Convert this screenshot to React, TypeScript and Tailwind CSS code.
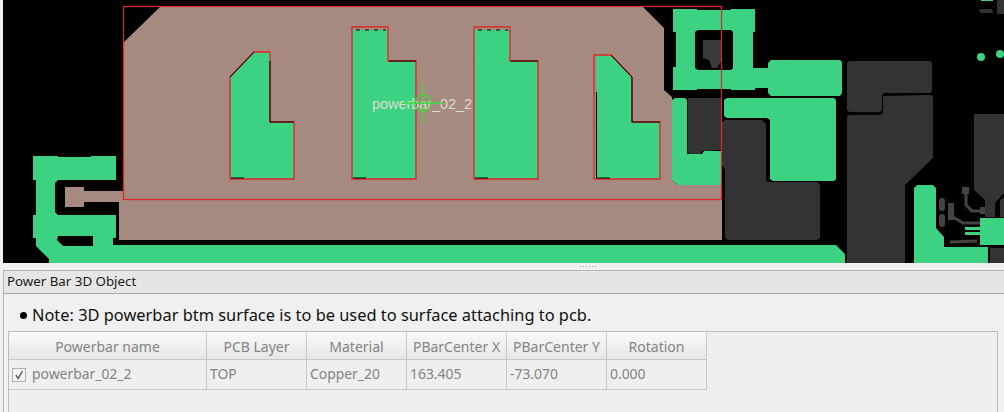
import React from 'react';

const GREEN = '#3dd281';
const PINK = '#a68a80';
const DARK = '#333333';
const RED = '#e0242a';

const padOutlines = [
  '230,77 254,52 270,52 270,122 294,122 294,179 230,179',
  '352,27 388,27 388,61 416,61 416,179 352,179',
  '474,27 510,27 510,61 538,61 538,179 474,179',
  '594,55 611,55 632,77 632,122 660,122 660,179 594,179',
];

const darkShapes = [
  '849,61 930,61 932,63 932,91 930,93 884,93 882,95 882,110 880,112 849,112 847,110 847,63',
  '849,115 880,115 883,113 883,96 931,95 933,97 933,158 905,185 905,263 847,263 847,117',
  '725,120 762,120 766,124 766,180 768,182 817,182 820,185 820,238 817,240 728,240 725,238 725,170 722,165 722,122',
  '688,98 722,98 722,150 702,151 700,154 690,154 688,152',
  '974,114 1004,114 1004,193 995,203 995,217 985,217 985,200 974,190',
  '1000,200 1004,197 1004,217 1000,217',
  '990,248 1004,248 1004,263 990,263',
  '980,9 992,9 993,13 981,13 979,11',
  '997,0 1004,0 1004,14 997,14',
];

const columns = [
  { name: 'Powerbar name', width: 198 },
  { name: 'PCB Layer', width: 100 },
  { name: 'Material', width: 100 },
  { name: 'PBarCenter X', width: 100 },
  { name: 'PBarCenter Y', width: 100 },
  { name: 'Rotation', width: 100 },
];

const row = ['powerbar_02_2', 'TOP', 'Copper_20', '163.405', '-73.070', '0.000'];

function BoardView() {
  return (
    <svg viewBox="3 0 1001 263" className="block h-[263px] w-[1001px] bg-black">
      {/* pink copper area under the power bar */}
      <polygon
        fill={PINK}
        points="124,42 160,7 643,7 664,28 664,90 672,97 672,180 678,185 722,185 722,240 119,240 119,199 124,199"
      />
      <rect x="65" y="187" width="19" height="20" fill={PINK} />
      <rect x="84" y="191" width="40" height="11" fill={PINK} />

      {darkShapes.map((points) => (
        <polygon key={points} points={points} fill={DARK} />
      ))}

      {/* green copper */}
      <g fill={GREEN}>
        <polygon points="33,156 58,156 58,157 91,157 91,156 116,156 116,180 58,180 55,183 55,212 58,215 116,215 116,238 113,238 113,245 836,245 845,254 845,263 49,263 49,259 36,246 36,238 33,238 33,215 36,215 36,180 33,180" />
        <polygon points="673,9 697,9 697,10 731,10 731,9 755,9 755,32 753,32 753,68 768,68 768,63 771,60 840,60 842,62 842,93 840,96 771,96 768,93 768,88 755,88 755,90 731,90 731,89 697,89 697,90 673,90 673,67 676,67 676,32 673,32" />
        <polygon points="675,98 685,98 687,100 687,154 702,154 704,151 722,151 722,185 678,185 672,180 672,100" />
        <polygon points="727,98 834,98 836,100 836,179 834,181 773,181 770,179 770,120 767,118 727,118 724,116 724,100" />
        <polygon points="917,185 933,185 936,188 936,228 944,237 944,247 988,247 988,263 914,263 914,188" />
        <rect x="980" y="218" width="24" height="27" />
        <rect x="965" y="227" width="15" height="3" />
        <rect x="965" y="232" width="15" height="3" />
        <rect x="981" y="0" width="12" height="1" />
        <circle cx="981" cy="57" r="4" />
        <circle cx="1000" cy="54" r="4" />
      </g>

      {/* holes in the green copper */}
      <polygon points="58,236 93,236 93,246 63,246 57,240" fill="black" />
      <polygon points="698,30 731,30 733,32 733,68 731,70 698,70 695,68 695,32" fill="black" />
      <polygon points="703,40 722,40 722,60 717,68 712,68 709,60 703,58" fill="#3a3a3a" />
      <rect x="988" y="248" width="2" height="15" fill="black" />

      {/* small traces around the bottom right connector */}
      <g fill="#444444">
        <rect x="962" y="187" width="7" height="7" />
        <rect x="980" y="207" width="5" height="7" />
        <rect x="948" y="203" width="6" height="17" />
        <rect x="939" y="198" width="6" height="13" rx="3" />
        <rect x="939" y="214" width="6" height="13" rx="3" />
      </g>
      <g stroke="#444444" strokeWidth="3" fill="none">
        <path d="M966 194 L966 205 L972 211 L981 211" />
        <path d="M953 217 L963 223 L980 223" />
        <path d="M950 242 L977 241" />
      </g>

      {/* power bar outline */}
      <rect x="123.5" y="6.5" width="598" height="193" fill="none" stroke={RED} strokeWidth="1.2" />
      {padOutlines.map((points) => (
        <polygon key={points} points={points} fill={GREEN} stroke={RED} strokeWidth="1.3" />
      ))}
      <rect x="353" y="28" width="34" height="2" fill={PINK} />
      <rect x="475" y="28" width="34" height="2" fill={PINK} />
      <rect x="595" y="56" width="1.5" height="122" fill={PINK} />
      <path d="M230 77 L254 52 M270 61 L270 122 L294 122 M231 178 L244 178" stroke="black" strokeWidth="1" fill="none" />
      <path d="M389 61 L416 61 M353 178 L366 178 M511 61 L538 61 M475 178 L488 178" stroke="black" strokeWidth="1" fill="none" />
      <path d="M611 55 L632 77 L632 122 L660 122 M596.5 92 L596.5 178 L610 178" stroke="black" strokeWidth="1" fill="none" />
      <path d="M356 30 L386 30 M478 30 L508 30" stroke="black" strokeWidth="1" strokeDasharray="4 5" fill="none" />

      {/* label and origin marker */}
      <text x="372" y="109" fontFamily="'Liberation Sans', sans-serif" fontSize="14.4" fill="#d8ddd0">
        powerbar_02_2
      </text>
      <g stroke="#3ddc3d" strokeWidth="1.3" fill="none">
        <path d="M423 83 L423 123 M403 103 L443 103" />
        <circle cx="423" cy="103" r="8" />
      </g>
    </svg>
  );
}

export default function App() {
  return (
    <div className="flex h-[412px] w-[1004px] flex-col overflow-hidden bg-[#f0f0f0] font-['Noto_Sans',sans-serif]">
      <div className="flex">
        <div className="w-[3px] bg-[#f0f0f0]" />
        <BoardView />
      </div>

      {/* splitter */}
      <div className="flex h-[7px] items-center justify-center gap-[2px] pl-[171px]">
        {[0, 1, 2, 3, 4, 5].map((i) => (
          <span key={i} className="h-px w-px bg-[#a8a8a8]" />
        ))}
      </div>

      <div className="ml-[3px] flex flex-1 flex-col border-l border-t border-[#b4b4b4] bg-[#f0f0f0]">
        <div className="flex h-[23px] items-center border-b border-[#ababab] bg-[#e6e6e6] pl-[3px] text-[13.3px] text-[#1a1a1a]">
          Power Bar 3D Object
        </div>

        <div className="flex h-[37px] items-center pl-[16px] pt-[5px] text-[16.4px] text-[#111111]">
          <span className="mr-[5px] h-[7px] w-[7px] rounded-full bg-black" />
          Note: 3D powerbar btm surface is to be used to surface attaching to pcb.
        </div>

        <div className="ml-[4px] mr-[6px] flex-1 border-l border-r border-t border-[#bcbcbc] bg-[#efefef]">
          <div className="flex h-[28px] w-[698px] border-b border-[#c8c8c8]">
            {columns.map((col) => (
              <div
                key={col.name}
                style={{ width: col.width }}
                className="flex items-center justify-center border-r border-[#c8c8c8] bg-gradient-to-b from-[#fafafa] to-[#e6e6e6] pt-[1px] text-[14px] text-[#848484]"
              >
                {col.name}
              </div>
            ))}
          </div>
          <div className="flex h-[30px] w-[698px] border-b border-[#c8c8c8]">
            {row.map((value, i) => (
              <div
                key={value}
                style={{ width: columns[i].width }}
                className="flex items-center gap-[6px] border-r border-[#c8c8c8] pl-[3px] text-[13.9px] text-[#848484]"
              >
                {i === 0 && (
                  <span className="flex h-[14px] w-[14px] items-center justify-center border border-[#b0b0b0] bg-[#f4f4f4]">
                    <svg viewBox="0 0 12 12" className="h-[12px] w-[12px]">
                      <path d="M3 6 L5 9.5 L9.5 2" fill="none" stroke="#555555" strokeWidth="1.4" />
                    </svg>
                  </span>
                )}
                {value}
              </div>
            ))}
          </div>
        </div>
      </div>
    </div>
  );
}
